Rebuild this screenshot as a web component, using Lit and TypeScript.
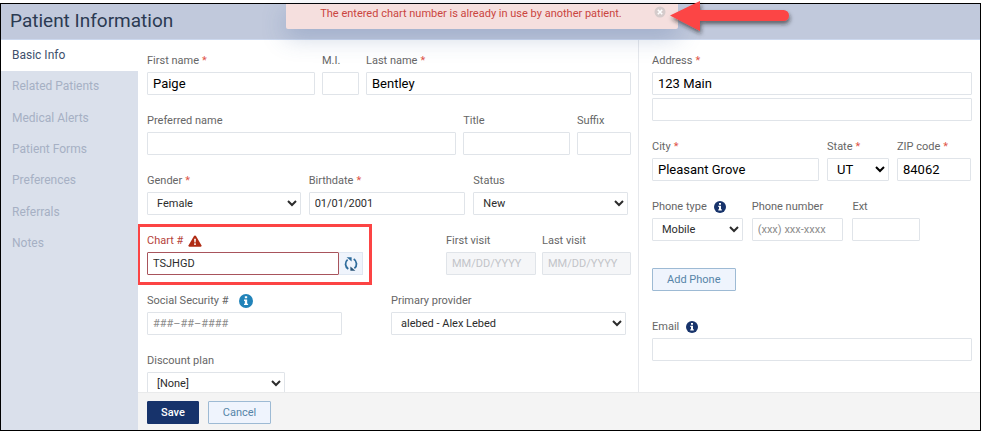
import { LitElement, html, css, nothing, TemplateResult } from "lit";
import { customElement, state } from "lit/decorators.js";

const SECTIONS = [
  "Basic Info",
  "Related Patients",
  "Medical Alerts",
  "Patient Forms",
  "Preferences",
  "Referrals",
  "Notes",
];

const infoIcon = (cls = "") => html`
  <svg class="info ${cls}" viewBox="0 0 12 12" aria-hidden="true">
    <circle cx="6" cy="6" r="6" />
    <path fill="#fff" d="M5 2h2v1.7H5zM4.3 4.7H7v3.6h.8v1.2H4.3V8.300H5V5.900h-.7z" />
  </svg>
`;

const warningIcon = html`
  <svg class="warning" viewBox="0 0 14 12" aria-hidden="true">
    <path d="M7 0.400Q7.600 0.400 8 1L13.400 10.300Q13.900 11.600 12.700 11.700H1.300Q0.100 11.600 0.600 10.300L6 1Q6.400 0.400 7 0.400Z" />
    <path fill="#fff" d="M6.100 3.800h1.800l-.3 3.600H6.400zM6.200 8.300h1.600v1.600H6.200z" />
  </svg>
`;

const refreshIcon = html`
  <svg class="refresh" viewBox="0 0 14 14" aria-hidden="true">
    <path d="M4.300 11.900A5.700 5.700 0 0 1 3.600 2.600" fill="none" stroke="#2f6c9c" stroke-width="1.800" />
    <path d="M2.600 0.300H7.600V4.600Z" fill="#2f6c9c" />
    <path d="M9.700 2.100A5.700 5.700 0 0 1 10.400 11.400" fill="none" stroke="#2f6c9c" stroke-width="1.800" />
    <path d="M11.400 13.700H6.400V9.400Z" fill="#2a5578" />
  </svg>
`;

@customElement("app-root")
export class AppRoot extends LitElement {
  @state() private section = SECTIONS[0];
  @state() private alertOpen = true;

  static styles = css`
    :host {
      display: block;
      height: 100vh;
      box-sizing: border-box;
      padding-top: 3px;
      background: #fff;
      font-family: Roboto, "Liberation Sans", sans-serif;
      font-size: 11px;
      color: #666;
    }
    *,
    *::before,
    *::after {
      box-sizing: border-box;
    }
    .window {
      display: flex;
      flex-direction: column;
      height: 100%;
      border: 1px solid #000;
      position: relative;
    }
    .header {
      flex: none;
      height: 36px;
      padding: 0 9px 2px;
      display: flex;
      align-items: center;
      background: #c1c9dc;
      border-bottom: 1px solid #ccd8ee;
      position: relative;
      z-index: 1;
    }
    h1 {
      margin: 0;
      font-size: 19px;
      line-height: 24px;
      font-weight: 400;
      color: #2b3a52;
    }
    .toast {
      position: absolute;
      top: 0;
      left: 285px;
      width: 392px;
      height: 25px;
      padding: 0 22px 7px 0;
      display: flex;
      align-items: center;
      justify-content: center;
      background: #f5dfde;
      border-radius: 0 0 2px 2px;
      box-shadow: 0 8px 24px rgba(60, 95, 150, 0.28);
      color: #ca4540;
      white-space: nowrap;
    }
    .close {
      position: absolute;
      top: 2px;
      right: 12px;
      width: 12px;
      height: 12px;
      padding: 0;
      border: 0;
      background: none;
    }
    .close svg {
      display: block;
      width: 12px;
      height: 12px;
    }
    .pointer {
      position: absolute;
      top: -4px;
      left: 380px;
      width: 132px;
      height: 40px;
    }
    .body {
      flex: 1;
      min-height: 0;
      display: flex;
    }
    nav {
      flex: none;
      width: 137px;
      background: #dae0eb;
    }
    .sections {
      display: grid;
      grid-auto-rows: 1fr;
      height: 219px;
      margin: 0;
      padding: 0;
      list-style: none;
    }
    .sections a {
      display: flex;
      align-items: center;
      height: 100%;
      padding: 0 0 1px 11px;
      font-size: 12px;
      color: #a6b0c4;
      text-decoration: none;
    }
    .sections a.active {
      background: #fff;
      color: #40506c;
    }
    form {
      flex: 1;
      min-width: 0;
      display: flex;
      flex-direction: column;
      background: #fff;
    }
    .columns {
      flex: 1;
      min-height: 0;
      overflow-y: auto;
      scrollbar-width: none;
      display: grid;
      grid-template-columns: 500fr 342fr;
    }
    .column {
      display: flex;
      flex-direction: column;
      gap: 17px;
      padding: 12px 7px 0 9px;
    }
    .contact {
      padding-left: 13px;
      padding-right: 8px;
      border-left: 1px solid #e6e8ec;
    }
    .row {
      display: grid;
      column-gap: 7px;
    }
    .row.name {
      grid-template-columns: 168fr 37px 265fr;
    }
    .row.preferred {
      grid-template-columns: 310fr 107fr 54px;
    }
    .row.birth {
      grid-template-columns: 154fr 157fr 155fr;
      padding-right: 3px;
      column-gap: 8px;
    }
    .row.chart {
      grid-template-columns: 217fr 71fr 90px 89px;
      column-gap: 6px;
    }
    .row.provider {
      grid-template-columns: 195fr 235fr;
      column-gap: 49px;
      padding-right: 5px;
    }
    .row.discount {
      grid-template-columns: 138fr 346fr;
      column-gap: 0;
    }
    .row.city {
      grid-template-columns: 167fr 62px 74px;
      column-gap: 8px;
      padding-right: 1px;
    }
    .row.phone {
      grid-template-columns: 91fr 92fr 68fr 43fr;
      column-gap: 9px;
    }
    .row.add {
      padding: 10px 0;
      justify-items: start;
    }
    .field {
      display: flex;
      flex-direction: column;
      gap: 3px;
      min-width: 0;
      position: relative;
    }
    label {
      display: flex;
      align-items: center;
      height: 17px;
      line-height: 17px;
      white-space: nowrap;
    }
    .required {
      margin-left: 3px;
      color: #e0554a;
    }
    input,
    select {
      width: 100%;
      height: 23px;
      margin: 0;
      border: 1px solid #e0e4e9;
      border-radius: 1px;
      background: #fff;
      font: inherit;
      color: #2c2c2c;
      outline: none;
    }
    input {
      padding: 0 5px;
    }
    select {
      padding: 0 0 0 5px;
    }
    .strong {
      font-size: 13px;
      color: #000;
    }
    input::placeholder {
      color: #8c8c8c;
      opacity: 1;
    }
    input:disabled {
      background: #f5f6f8;
    }
    input:disabled::placeholder {
      color: #c2c4c8;
    }
    .error label {
      color: #b5433a;
    }
    .error input {
      border-color: #a8545c;
    }
    .error::after {
      content: "";
      position: absolute;
      inset: -8px -9px -10px -10px;
      border: 3px solid #fc4444;
      pointer-events: none;
    }
    .combo {
      display: flex;
    }
    .combo button {
      flex: none;
      width: 24px;
      padding: 0;
      display: grid;
      place-items: center;
      border: 1px solid #dfe7f2;
      border-left: 0;
      background: #eff4fc;
    }
    .info {
      width: 12px;
      height: 12px;
      margin-left: 7px;
      fill: #17336b;
    }
    .info.large {
      width: 14px;
      height: 14px;
      margin-left: 10px;
      fill: #2183b9;
    }
    .warning {
      width: 14px;
      height: 12px;
      margin-left: 5px;
      fill: #b02c14;
    }
    .refresh {
      width: 14px;
      height: 14px;
    }
    .button {
      height: 23px;
      padding: 0 14px;
      border: 1px solid #9dbad4;
      border-radius: 1px;
      background: #eff4fd;
      font: inherit;
      color: #5684a8;
    }
    .button.save {
      padding: 0 13px;
      border-color: #17336b;
      background: #17336b;
      color: #fff;
      font-weight: 500;
    }
    footer {
      flex: none;
      display: flex;
      align-items: flex-start;
      gap: 9px;
      height: 38px;
      padding: 8px 9px 0;
      border-top: 1px solid #e9eaeb;
      background: #f4f4f4;
    }
  `;

  private field(
    id: string,
    label: string,
    control: TemplateResult,
    opts: { required?: boolean; icon?: TemplateResult; error?: boolean } = {}
  ) {
    return html`
      <div class="field ${opts.error ? "error" : ""}">
        <label for=${id}
          >${label}${opts.required ? html`<span class="required">*</span>` : nothing}${opts.icon ?? nothing}</label
        >
        ${control}
      </div>
    `;
  }

  private text(id: string, value = "", strong = false) {
    return html`<input id=${id} type="text" class=${strong ? "strong" : ""} .value=${value} />`;
  }

  private select(id: string, value: string, strong = false) {
    return html`<select id=${id} class=${strong ? "strong" : ""}>
      <option>${value}</option>
    </select>`;
  }

  private renderToast() {
    return html`
      <div class="toast" role="alert">
        The entered chart number is already in use by another patient.
        <button class="close" aria-label="Dismiss" @click=${() => (this.alertOpen = false)}>
          <svg viewBox="0 0 12 12">
            <circle cx="6" cy="6" r="5.500" fill="#d5cbcb" />
            <path d="M3.800 3.800l4.400 4.400M8.200 3.800l-4.400 4.400" stroke="#fff" stroke-width="1.600" />
          </svg>
        </button>
        <svg class="pointer" viewBox="0 0 132 40" aria-hidden="true">
          <defs>
            <filter id="drop" x="-10%" y="-20%" width="120%" height="160%">
              <feDropShadow dx="1" dy="3" stdDeviation="2" flood-color="#222" flood-opacity="0.6" />
            </filter>
          </defs>
          <path
            d="M4 15.500L34 1V10H117.500A5.500 5.500 0 0 1 117.500 21H34V31Z"
            fill="#fc4444"
            filter="url(#drop)"
          />
        </svg>
      </div>
    `;
  }

  render() {
    return html`
      <div class="window">
        <header class="header">
          <h1>Patient Information</h1>
          ${this.alertOpen ? this.renderToast() : nothing}
        </header>
        <div class="body">
          <nav>
            <ul class="sections">
              ${SECTIONS.map(
                (name) => html`<li>
                  <a
                    href="#"
                    class=${name === this.section ? "active" : ""}
                    @click=${(e: Event) => {
                      e.preventDefault();
                      this.section = name;
                    }}
                    >${name}</a
                  >
                </li>`
              )}
            </ul>
          </nav>
          <form @submit=${(e: Event) => e.preventDefault()}>
            <div class="columns">
              <div class="column">
                <div class="row name">
                  ${this.field("first", "First name", this.text("first", "Paige", true), { required: true })}
                  ${this.field("mi", "M.I.", this.text("mi"))}
                  ${this.field("last", "Last name", this.text("last", "Bentley", true), { required: true })}
                </div>
                <div class="row preferred">
                  ${this.field("preferred", "Preferred name", this.text("preferred"))}
                  ${this.field("title", "Title", this.text("title"))}
                  ${this.field("suffix", "Suffix", this.text("suffix"))}
                </div>
                <div class="row birth">
                  ${this.field("gender", "Gender", this.select("gender", "Female"), { required: true })}
                  ${this.field("birthdate", "Birthdate", this.text("birthdate", "01/01/2001"), { required: true })}
                  ${this.field("status", "Status", this.select("status", "New"))}
                </div>
                <div class="row chart">
                  ${this.field(
                    "chart",
                    "Chart #",
                    html`<div class="combo">
                      ${this.text("chart", "TSJHGD")}
                      <button type="button" aria-label="Generate chart number">${refreshIcon}</button>
                    </div>`,
                    { icon: warningIcon, error: true }
                  )}
                  <span></span>
                  ${this.field(
                    "first-visit",
                    "First visit",
                    html`<input id="first-visit" type="text" placeholder="MM/DD/YYYY" disabled />`
                  )}
                  ${this.field(
                    "last-visit",
                    "Last visit",
                    html`<input id="last-visit" type="text" placeholder="MM/DD/YYYY" disabled />`
                  )}
                </div>
                <div class="row provider">
                  ${this.field(
                    "ssn",
                    "Social Security #",
                    html`<input id="ssn" type="text" placeholder="###–##–####" />`,
                    { icon: infoIcon("large") }
                  )}
                  ${this.field("provider", "Primary provider", this.select("provider", "alebed - Alex Lebed"))}
                </div>
                <div class="row discount">
                  ${this.field("discount", "Discount plan", this.select("discount", "[None]"))}
                </div>
              </div>
              <div class="column contact">
                <div class="field">
                  ${this.field("address", "Address", this.text("address", "123 Main", true), { required: true })}
                  <input id="address2" type="text" aria-label="Address line 2" />
                </div>
                <div class="row city">
                  ${this.field("city", "City", this.text("city", "Pleasant Grove", true), { required: true })}
                  ${this.field("state", "State", this.select("state", "UT", true), { required: true })}
                  ${this.field("zip", "ZIP code", this.text("zip", "84062", true), { required: true })}
                </div>
                <div class="row phone">
                  ${this.field("phone-type", "Phone type", this.select("phone-type", "Mobile"), { icon: infoIcon() })}
                  ${this.field(
                    "phone",
                    "Phone number",
                    html`<input id="phone" type="tel" placeholder="(xxx) xxx-xxxx" />`
                  )}
                  ${this.field("ext", "Ext", this.text("ext"))}
                </div>
                <div class="row add">
                  <button type="button" class="button">Add Phone</button>
                </div>
                ${this.field("email", "Email", html`<input id="email" type="email" />`, { icon: infoIcon() })}
              </div>
            </div>
            <footer>
              <button type="submit" class="button save">Save</button>
              <button type="button" class="button">Cancel</button>
            </footer>
          </form>
        </div>
      </div>
    `;
  }
}
